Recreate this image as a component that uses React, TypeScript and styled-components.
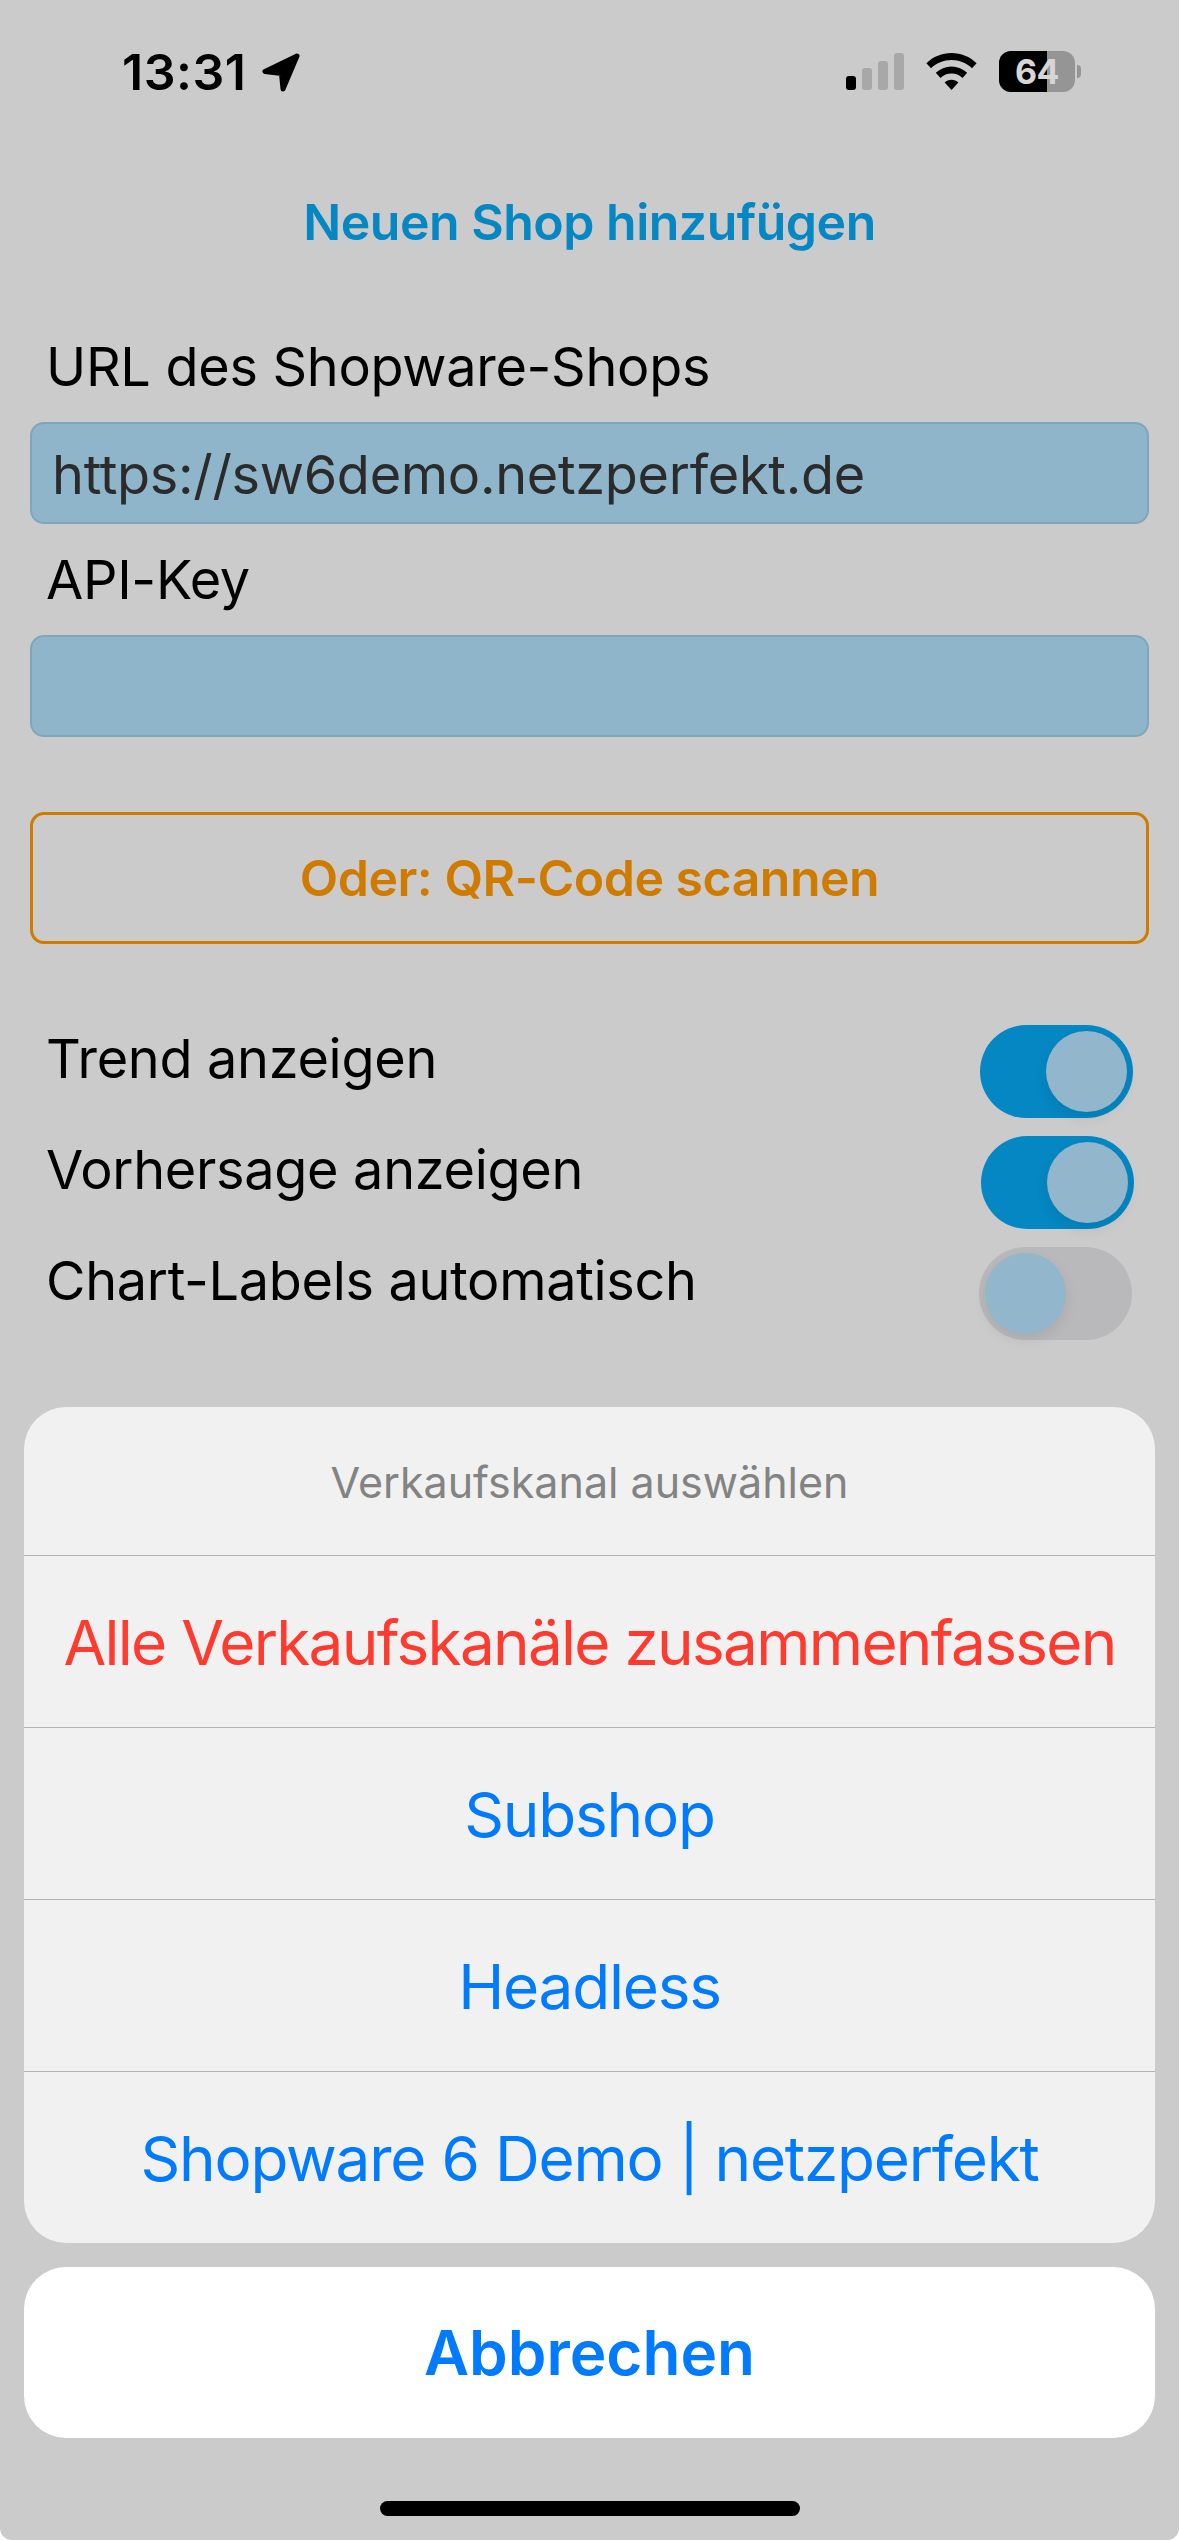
import React from 'react';
import styled, { createGlobalStyle } from 'styled-components';

const GlobalStyle = createGlobalStyle`
    html,
    body {
        margin: 0;
        padding: 0;
        background: #fff;
    }
`;

const channels = ['Subshop', 'Headless', 'Shopware 6 Demo | netzperfekt'];

const toggles = [
    { label: 'Trend anzeigen', on: true, nudge: 0 },
    { label: 'Vorhersage anzeigen', on: true, nudge: -1 },
    { label: 'Chart-Labels automatisch', on: false, nudge: 1 },
];

const App: React.FC = () => {
    return (
        <>
            <GlobalStyle />
            <Page>
                <StatusBar>
                    <TimeGroup>
                        <Time>13:31</Time>
                        <svg width="38" height="39" viewBox="0 0 38 39">
                            <path
                                d="M35 3L3 18.500L19.500 20.500L21 36Z"
                                fill="#000"
                                stroke="#000"
                                strokeWidth="5"
                                strokeLinejoin="round"
                            />
                        </svg>
                    </TimeGroup>
                    <StatusIcons>
                        <SignalBars>
                            <Bar $height={14} $active />
                            <Bar $height={22} />
                            <Bar $height={29} />
                            <Bar $height={37} />
                        </SignalBars>
                        <svg width="51" height="37" viewBox="0 0 51 37">
                            <path
                                d="M25.5 0C35 0 43.800 3.700 50.600 10.200L46 15.300C40.500 10.100 33.300 7.100 25.500 7.100S10.500 10.100 5 15.300L.4 10.200C7.200 3.700 16 0 25.500 0z"
                                fill="#000"
                            />
                            <path
                                d="M25.500 13.500c5.900 0 11.400 2.300 15.700 6.300l-4.700 5.100c-3-2.800-6.800-4.300-11-4.300s-8 1.500-11 4.300L9.800 19.800c4.300-4 9.800-6.300 15.700-6.300z"
                                fill="#000"
                            />
                            <path d="M25.500 26.800c2.600 0 5 1 6.800 2.600L25.500 37l-6.800-7.600c1.800-1.600 4.200-2.600 6.800-2.600z" fill="#000" />
                        </svg>
                        <Battery>
                            <BatteryBody>
                                <BatteryLevel />
                                <BatteryText>64</BatteryText>
                            </BatteryBody>
                            <BatteryCap />
                        </Battery>
                    </StatusIcons>
                </StatusBar>

                <Title>Neuen Shop hinzufügen</Title>

                <Form>
                    <FieldLabel>URL des Shopware-Shops</FieldLabel>
                    <FieldInput>https://sw6demo.netzperfekt.de</FieldInput>
                    <FieldLabel $spaced>API-Key</FieldLabel>
                    <FieldInput />
                    <ScanButton>Oder: QR-Code scannen</ScanButton>

                    <ToggleList>
                        {toggles.map((toggle) => (
                            <ToggleRow key={toggle.label}>
                                <ToggleLabel>{toggle.label}</ToggleLabel>
                                <Switch $on={toggle.on} $nudge={toggle.nudge}>
                                    <Knob />
                                </Switch>
                            </ToggleRow>
                        ))}
                    </ToggleList>
                </Form>

                <Sheet>
                    <SheetGroup>
                        <SheetHeader>Verkaufskanal auswählen</SheetHeader>
                        <SheetRow $danger>Alle Verkaufskanäle zusammenfassen</SheetRow>
                        {channels.map((channel) => (
                            <SheetRow key={channel}>{channel}</SheetRow>
                        ))}
                    </SheetGroup>
                    <CancelButton>Abbrechen</CancelButton>
                </Sheet>

                <HomeArea>
                    <HomeIndicator />
                </HomeArea>
            </Page>
        </>
    );
};

const Page = styled.div`
    width: 1179px;
    height: 2540px;
    background-color: #cbcbcb;
    border-radius: 0 0 12px 12px;
    overflow: hidden;
    font-family: 'Inter', 'Liberation Sans', sans-serif;
    display: flex;
    flex-direction: column;
`;

const StatusBar = styled.div`
    height: 120px;
    box-sizing: border-box;
    padding: 51px 98px 0 122px;
    display: flex;
    justify-content: space-between;
    align-items: flex-start;
`;

const TimeGroup = styled.div`
    display: flex;
    align-items: flex-start;
    gap: 16px;

    svg {
        margin-top: 2px;
    }
`;

const Time = styled.span`
    font-size: 50px;
    line-height: 42px;
    font-weight: 600;
    letter-spacing: 0.5px;
    color: #000;
`;

const StatusIcons = styled.div`
    display: flex;
    align-items: flex-start;
    padding-top: 2px;
    gap: 22px;
`;

const SignalBars = styled.div`
    height: 37px;
    display: flex;
    align-items: flex-end;
    gap: 6px;
`;

const Bar = styled.div<{ $height: number; $active?: boolean }>`
    width: 10px;
    height: ${(p) => p.$height}px;
    border-radius: 3px;
    background-color: ${(p) => (p.$active ? '#000' : '#a8a8a8')};
`;

const Battery = styled.div`
    display: flex;
    align-items: center;
    gap: 2px;
    margin-top: -2px;
`;

const BatteryBody = styled.div`
    position: relative;
    width: 76px;
    height: 41px;
    border-radius: 12px;
    overflow: hidden;
    background-color: #959595;
    display: flex;
    align-items: center;
    justify-content: center;
`;

const BatteryLevel = styled.div`
    position: absolute;
    top: 0;
    bottom: 0;
    left: 0;
    width: 48px;
    background-color: #000;
`;

const BatteryText = styled.span`
    position: relative;
    font-size: 34px;
    font-weight: 700;
    line-height: 41px;
    letter-spacing: -0.5px;
    color: #d6d6d6;
`;

const BatteryCap = styled.div`
    width: 4px;
    height: 13px;
    border-radius: 0 7px 7px 0;
    background-color: #959595;
`;

const Title = styled.div`
    height: 204px;
    line-height: 204px;
    text-align: center;
    font-size: 50px;
    font-weight: 600;
    letter-spacing: -0.5px;
    color: #0487c3;
`;

const Form = styled.div`
    padding: 0 30px;
    display: flex;
    flex-direction: column;
`;

const FieldLabel = styled.div<{ $spaced?: boolean }>`
    height: 86px;
    line-height: 86px;
    margin: ${(p) => (p.$spaced ? '13px' : '0')} 0 12px 16px;
    font-size: 54px;
    letter-spacing: -0.3px;
    color: #000;
`;

const FieldInput = styled.div`
    height: 102px;
    box-sizing: border-box;
    padding: 0 20px;
    border: 2px solid #7fa6bc;
    border-radius: 14px;
    background-color: #8fb5ca;
    font-size: 54px;
    letter-spacing: -0.3px;
    line-height: 101px;
    color: #2b2b2b;
`;

const ScanButton = styled.div`
    height: 132px;
    box-sizing: border-box;
    margin-top: 75px;
    border: 3px solid #cf7b00;
    border-radius: 14px;
    text-align: center;
    font-size: 50px;
    font-weight: 600;
    letter-spacing: -0.5px;
    line-height: 126px;
    color: #cf7b00;
`;

const ToggleList = styled.div`
    margin-top: 81px;
    display: flex;
    flex-direction: column;
    gap: 18px;
`;

const ToggleRow = styled.div`
    display: flex;
    align-items: flex-start;
    justify-content: space-between;
`;

const ToggleLabel = styled.div`
    margin-left: 16px;
    font-size: 54px;
    letter-spacing: -0.3px;
    line-height: 68px;
    color: #000;
`;

const Switch = styled.div<{ $on: boolean; $nudge: number }>`
    width: 153px;
    height: 93px;
    box-sizing: border-box;
    padding: 6px;
    margin-right: ${(p) => 16 + p.$nudge}px;
    border-radius: 47px;
    background-color: ${(p) => (p.$on ? '#0487c3' : '#b9b9bb')};
    display: flex;
    justify-content: ${(p) => (p.$on ? 'flex-end' : 'flex-start')};
`;

const Knob = styled.div`
    width: 81px;
    height: 81px;
    border-radius: 50%;
    background-color: #92b6cb;
    box-shadow: 0 6px 14px rgba(0, 0, 0, 0.08);
`;

const Sheet = styled.div`
    margin-top: 67px;
    padding: 0 24px;
    display: flex;
    flex-direction: column;
    gap: 24px;
`;

const SheetGroup = styled.div`
    border-radius: 42px;
    overflow: hidden;
    background-color: #f1f1f1;
`;

const SheetHeader = styled.div`
    height: 148px;
    text-align: center;
    font-size: 43px;
    line-height: 150px;
    color: #838383;
`;

const SheetRow = styled.div<{ $danger?: boolean }>`
    height: 172px;
    box-sizing: border-box;
    border-top: 1px solid #b2b2b2;
    text-align: center;
    font-size: 62px;
    letter-spacing: ${(p) => (p.$danger ? '-1.700px' : '-1.200px')};
    line-height: 173px;
    color: ${(p) => (p.$danger ? '#ff3b30' : '#007aff')};
`;

const CancelButton = styled.div`
    height: 171px;
    border-radius: 42px;
    background-color: #fff;
    text-align: center;
    font-size: 62px;
    font-weight: 600;
    line-height: 171px;
    color: #007aff;
`;

const HomeArea = styled.div`
    flex: 1;
    display: flex;
    justify-content: center;
    padding-top: 63px;
`;

const HomeIndicator = styled.div`
    width: 420px;
    height: 15px;
    border-radius: 8px;
    background-color: #000;
`;

export default App;
